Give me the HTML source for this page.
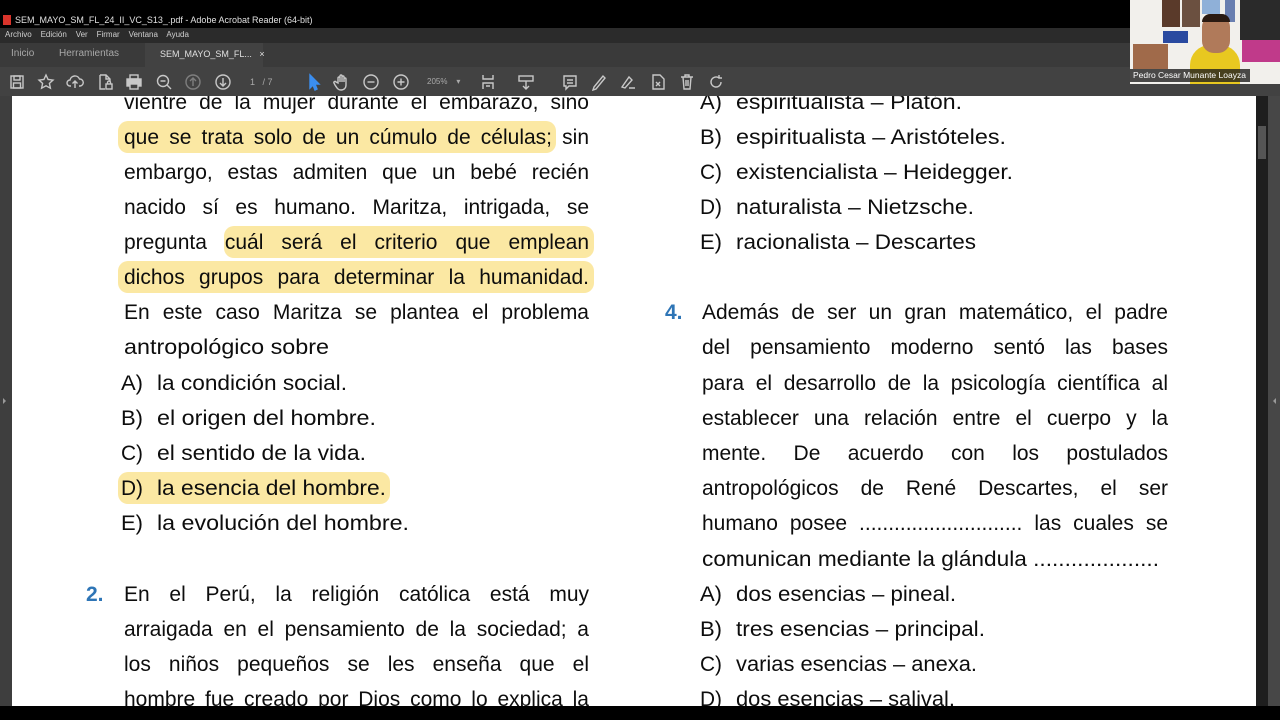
<!DOCTYPE html>
<html><head><meta charset="utf-8"><style>
*{margin:0;padding:0;box-sizing:border-box}
body{width:1280px;height:720px;overflow:hidden;background:#000;font-family:"Liberation Sans",sans-serif;position:relative}
.bar{position:absolute;left:0;width:1280px}
.ui{position:absolute;color:#d0d0d0;font-size:9px;white-space:nowrap}
.ic{position:absolute;top:73px;width:18px;height:18px}
.ic svg{width:18px;height:18px;fill:none;stroke:#c8c8c8;stroke-width:1.4}
#page{position:absolute;left:12px;top:96px;width:1244px;height:610px;background:#fff;overflow:hidden}
.l{position:absolute;height:28px;line-height:28px;font-size:21px;color:#0d0d0d;white-space:nowrap;font-family:"Liberation Sans",sans-serif}
.l span{display:inline-block;transform-origin:left center}
.n{position:absolute;height:28px;line-height:28px;font-size:21px;font-weight:bold;color:#2e75b6}
.hl{position:absolute;height:32px;background:#fbe8a3;border-radius:10px}
</style></head><body>
<div class="bar" style="top:0;height:28px;background:#000"></div>
<div style="position:absolute;left:3px;top:15px;width:8px;height:10px;background:#d9342b"></div>
<div class="ui" style="left:15px;top:15px;color:#e0e0e0">SEM_MAYO_SM_FL_24_II_VC_S13_.pdf - Adobe Acrobat Reader (64-bit)</div>
<div class="bar" style="top:28px;height:15px;background:#2b2b2b"></div>
<div class="ui" style="left:5px;top:30px;font-size:8px">Archivo&nbsp;&nbsp;&nbsp; Edición&nbsp;&nbsp;&nbsp; Ver&nbsp;&nbsp;&nbsp; Firmar&nbsp;&nbsp;&nbsp; Ventana&nbsp;&nbsp;&nbsp; Ayuda</div>
<div class="bar" style="top:43px;height:24px;background:#3a3a3a"></div>
<div style="position:absolute;left:145px;top:43px;width:118px;height:24px;background:#424242"></div>
<div class="ui" style="left:11px;top:48px;font-size:10px;color:#a8a8a8">Inicio</div>
<div class="ui" style="left:59px;top:48px;font-size:10px;color:#a8a8a8">Herramientas</div>
<div class="ui" style="left:160px;top:49px;font-size:9px;color:#e0e0e0">SEM_MAYO_SM_FL...&nbsp;&nbsp;&nbsp;×</div>
<div class="bar" style="top:67px;height:29px;background:#424242"></div>
<div class="ic" style="left:8px"><svg viewBox="0 0 18 18"><rect x="3" y="3" width="12" height="12"/><rect x="6" y="3" width="6" height="4"/><rect x="5.5" y="10" width="7" height="5"/></svg></div>
<div class="ic" style="left:37px"><svg viewBox="0 0 18 18"><path d="M9 2l2.1 4.5 4.9.6-3.6 3.3 1 4.8L9 12.8 4.6 15.2l1-4.8L2 7.1l4.9-.6z"/></svg></div>
<div class="ic" style="left:66px"><svg viewBox="0 0 18 18"><path d="M5 13H4a3 3 0 010-6 5 5 0 019.5-1A3.5 3.5 0 0114 13h-1M9 15V8M6.5 10.5L9 8l2.5 2.5"/></svg></div>
<div class="ic" style="left:96px"><svg viewBox="0 0 18 18"><path d="M4 2h6l4 4v3M4 2v14h5M10 2v4h4"/><rect x="10" y="11" width="6" height="5"/><path d="M11.5 11V9.5a1.5 1.5 0 013 0V11"/></svg></div>
<div class="ic" style="left:125px"><svg viewBox="0 0 18 18"><rect x="5" y="2" width="8" height="4"/><rect x="2" y="6" width="14" height="7" fill="#c8c8c8"/><rect x="5" y="11" width="8" height="5" fill="#424242"/></svg></div>
<div class="ic" style="left:155px"><svg viewBox="0 0 18 18"><circle cx="8" cy="8" r="5.5"/><path d="M12 12l4 4M5.5 8h5"/></svg></div>
<div class="ic" style="left:184px;opacity:.45"><svg viewBox="0 0 18 18"><circle cx="9" cy="9" r="7"/><path d="M9 13V5M6 8l3-3 3 3"/></svg></div>
<div class="ic" style="left:214px"><svg viewBox="0 0 18 18"><circle cx="9" cy="9" r="7"/><path d="M9 5v8M6 10l3 3 3-3"/></svg></div>
<div class="ui" style="left:250px;top:77px;font-size:9px;color:#aaa">1&nbsp;&nbsp;&nbsp;/ 7</div>
<div class="ic" style="left:304px"><svg viewBox="0 0 18 18"><path d="M6 2v13l3-3 2 5 2-1-2-5h4z" fill="#3b8ef0" stroke="#3b8ef0"/></svg></div>
<div class="ic" style="left:333px"><svg viewBox="0 0 18 18"><path d="M5 10V5a1 1 0 012 0v4V3a1 1 0 012 0v6V4a1 1 0 012 0v5V6a1 1 0 012 0v6c0 3-2 5-5 5s-4-2-6-5l-1-2a1 1 0 012-1z"/></svg></div>
<div class="ic" style="left:362px"><svg viewBox="0 0 18 18"><circle cx="9" cy="9" r="7"/><path d="M5.5 9h7"/></svg></div>
<div class="ic" style="left:392px"><svg viewBox="0 0 18 18"><circle cx="9" cy="9" r="7"/><path d="M5.5 9h7M9 5.5v7"/></svg></div>
<div class="ui" style="left:427px;top:77px;font-size:8px;color:#aaa">205%&nbsp;&nbsp;&nbsp;&nbsp;▾</div>
<div class="ic" style="left:480px"><svg viewBox="0 0 18 18"><path d="M3 2v4h10V2M3 16v-6h10v6M6 13h4"/></svg></div>
<div class="ic" style="left:517px"><svg viewBox="0 0 18 18"><rect x="2" y="3" width="14" height="5"/><path d="M9 8v8M6 13l3 3 3-3"/></svg></div>
<div class="ic" style="left:561px"><svg viewBox="0 0 18 18"><path d="M3 3h12v10H8l-3 3v-3H3zM6 7h6M6 10h6"/></svg></div>
<div class="ic" style="left:590px"><svg viewBox="0 0 18 18"><path d="M4 14L13 3l2 2-9 11-3 1z"/></svg></div>
<div class="ic" style="left:619px"><svg viewBox="0 0 18 18"><path d="M3 14l7-10 3 3-7 8zM10 15h6"/></svg></div>
<div class="ic" style="left:649px"><svg viewBox="0 0 18 18"><path d="M4 2h7l4 4v10H4zM7 9l4 4M11 9l-4 4"/></svg></div>
<div class="ic" style="left:678px"><svg viewBox="0 0 18 18"><path d="M3 4h12M7 4V2h4v2M5 4l1 12h6l1-12M8 7v6M10 7v6"/></svg></div>
<div class="ic" style="left:707px"><svg viewBox="0 0 18 18"><path d="M14 9a5 5 0 11-2-4M12 2v3h3"/></svg></div>
<!-- webcam -->
<div style="position:absolute;left:1130px;top:0;width:150px;height:84px;background:#f2f0ec;overflow:hidden">
<div style="position:absolute;left:32px;top:0;width:18px;height:27px;background:#5a3a2a"></div>
<div style="position:absolute;left:52px;top:0;width:18px;height:27px;background:#6b5040"></div>
<div style="position:absolute;left:72px;top:0;width:18px;height:14px;background:#8fb0d8"></div>
<div style="position:absolute;left:95px;top:0;width:10px;height:22px;background:#6a7fb0"></div>
<div style="position:absolute;left:110px;top:0;width:40px;height:40px;background:#2a2a2a"></div>
<div style="position:absolute;left:33px;top:31px;width:25px;height:12px;background:#2a4aa0"></div>
<div style="position:absolute;left:3px;top:44px;width:35px;height:25px;background:#a06a4a"></div>
<div style="position:absolute;left:112px;top:40px;width:38px;height:22px;background:#c03a8a"></div>
<div style="position:absolute;left:60px;top:45px;width:50px;height:39px;background:#e8c820;border-radius:20px 20px 0 0"></div>
<div style="position:absolute;left:72px;top:15px;width:28px;height:38px;background:#b07a5a;border-radius:12px"></div>
<div style="position:absolute;left:72px;top:14px;width:28px;height:8px;background:#2a1a12;border-radius:10px 10px 0 0"></div>
<div style="position:absolute;left:0;top:69px;width:120px;height:13px;background:rgba(30,30,30,.8)"></div>
<div style="position:absolute;left:3px;top:70px;font-size:8.5px;color:#fff;white-space:nowrap">Pedro Cesar Munante Loayza</div>
</div>
<!-- sides -->
<div style="position:absolute;left:0;top:96px;width:12px;height:610px;background:#3e3e3e"></div>
<div style="position:absolute;left:3px;top:398px;width:0;height:0;border-top:3px solid transparent;border-bottom:3px solid transparent;border-left:3px solid #999"></div>
<div style="position:absolute;left:1256px;top:96px;width:12px;height:610px;background:#1e1e1e"></div>
<div style="position:absolute;left:1258px;top:126px;width:8px;height:33px;background:#555"></div>
<div style="position:absolute;left:1268px;top:96px;width:12px;height:610px;background:#474747"></div>
<div style="position:absolute;left:1273px;top:398px;width:0;height:0;border-top:3px solid transparent;border-bottom:3px solid transparent;border-right:3px solid #999"></div>
<div class="bar" style="top:706px;height:14px;background:#000"></div>
<div id="page">
<div class="hl" style="left:106px;top:25px;width:438px"></div>
<div class="hl" style="left:212px;top:130px;width:370px"></div>
<div class="hl" style="left:106px;top:165px;width:476px"></div>
<div class="hl" style="left:106px;top:376px;width:272px"></div>
</div>
<script>
var P=document.getElementById('page');
function L(x,r,y,t,j){var d=document.createElement('div');d.className='l';d.style.left=(x-12)+'px';d.style.top=(y-96-13)+'px';var s=document.createElement('span');s.textContent=t;d.appendChild(s);P.appendChild(d);
 var w=r-x;var nat=s.getBoundingClientRect().width;
 if(nat>w){s.style.transform='scaleX('+(w/nat)+')';}
 else if(j){var sp=(t.match(/ /g)||[]).length;if(sp)s.style.wordSpacing=((w-nat)/sp)+'px';}
 else{s.style.transform='scaleX('+(w/nat)+')';}
}
function N(x,y,t){var d=document.createElement('div');d.className='n';d.style.left=(x-12)+'px';d.style.top=(y-96-13)+'px';d.textContent=t;P.appendChild(d);}
var J=1;
L(124,589,102,"vientre de la mujer durante el embarazo, sino",J);
L(124,589,137,"que se trata solo de un cúmulo de células; sin",J);
L(124,589,172,"embargo, estas admiten que un bebé recién",J);
L(124,589,207,"nacido sí es humano. Maritza, intrigada, se",J);
L(124,589,242,"pregunta cuál será el criterio que emplean",J);
L(124,589,277,"dichos grupos para determinar la humanidad.",J);
L(124,589,312,"En este caso Maritza se plantea el problema",J);
L(124,329,347,"antropológico sobre",0);
var lo=[[383,"A)","la condición social.",347],[418,"B)","el origen del hombre.",376],[453,"C)","el sentido de la vida.",366],[488,"D)","la esencia del hombre.",386],[523,"E)","la evolución del hombre.",409]];
lo.forEach(function(a){L(121,143,a[0],a[1],0);L(157,a[3],a[0],a[2],0);});
N(86,594,"2.");
L(124,589,594,"En el Perú, la religión católica está muy",J);
L(124,589,629,"arraigada en el pensamiento de la sociedad; a",J);
L(124,589,664,"los niños pequeños se les enseña que el",J);
L(124,589,699,"hombre fue creado por Dios como lo explica la",J);
var ro=[[102,"A)","espiritualista – Platón.",962],[137,"B)","espiritualista – Aristóteles.",1006],[172,"C)","existencialista – Heidegger.",1013],[207,"D)","naturalista – Nietzsche.",974],[242,"E)","racionalista – Descartes",976],
[594,"A)","dos esencias – pineal.",956],[629,"B)","tres esencias – principal.",985],[664,"C)","varias esencias – anexa.",977],[699,"D)","dos esencias – salival.",955]];
ro.forEach(function(a){L(700,722,a[0],a[1],0);L(736,a[3],a[0],a[2],0);});
N(665,312,"4.");
L(702,1168,312,"Además de ser un gran matemático, el padre",J);
L(702,1168,347,"del pensamiento moderno sentó las bases",J);
L(702,1168,383,"para el desarrollo de la psicología científica al",J);
L(702,1168,418,"establecer una relación entre el cuerpo y la",J);
L(702,1168,453,"mente. De acuerdo con los postulados",J);
L(702,1168,488,"antropológicos de René Descartes, el ser",J);
L(702,1168,523,"humano posee ............................ las cuales se",J);
L(702,1159,559,"comunican mediante la glándula ....................",0);
</script>
</body></html>
